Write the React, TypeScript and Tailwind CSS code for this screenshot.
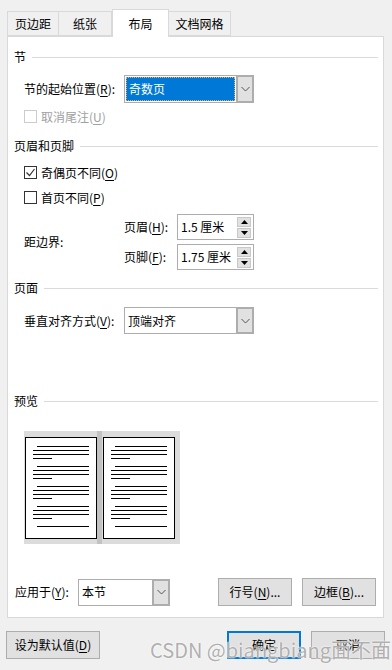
import type { ReactNode } from 'react'

const Key = ({ k }: { k: string }) => <span className="underline underline-offset-2">{k}</span>

function SectionHeader({ title, mt }: { title: string; mt: string }) {
  return (
    <div className={`flex items-center h-[14px] pl-[6px] pr-[5px] ${mt}`}>
      <span className="whitespace-nowrap">{title}</span>
      <div className="flex-1 h-px bg-[#dadada] ml-[6px]" />
    </div>
  )
}

function Chevron() {
  return (
    <svg width="9" height="6" viewBox="0 0 9 6">
      <polyline points="0.5,1 4.5,5 8.5,1" fill="none" stroke="#555" strokeWidth="1" />
    </svg>
  )
}

function Combo({ w, h, children }: { w: string; h: string; children: ReactNode }) {
  return (
    <div className={`flex ${w} ${h} bg-white`}>
      <div className="flex-1 flex items-center border border-r-0 border-[#adadad] min-w-0">{children}</div>
      <div className="w-[18px] border-2 border-[#adadad] bg-[#e1e1e1] flex items-center justify-center">
        <Chevron />
      </div>
    </div>
  )
}

function CheckBox({ checked, disabled, children }: { checked?: boolean; disabled?: boolean; children: ReactNode }) {
  return (
    <div className={`flex items-center h-[13px] pl-[16px] ${disabled ? 'text-[#a0a0a0]' : 'text-black'}`}>
      <div
        className={`w-[13px] h-[13px] border bg-white flex items-center justify-center ${
          disabled ? 'border-[#cccccc]' : 'border-[#333333]'
        }`}
      >
        {checked && (
          <svg width="11" height="11" viewBox="0 0 11 11">
            <polyline points="1.5,5.5 4.5,8.5 9.5,2" fill="none" stroke="#333" strokeWidth="1.2" />
          </svg>
        )}
      </div>
      <span className="ml-[4px] whitespace-nowrap">{children}</span>
    </div>
  )
}

function Spinner({ value }: { value: string }) {
  return (
    <div className="flex w-[77px] h-[26px] border border-[#adadad] bg-white items-center">
      <span className="flex-1 pl-[3px] whitespace-nowrap">{value}</span>
      <div className="flex flex-col gap-[1px] mr-[2px]">
        <div className="w-[14px] h-[10px] bg-[#e1e1e1] border border-[#c8c8c8] flex items-center justify-center">
          <svg width="7" height="4" viewBox="0 0 7 4"><polygon points="0,4 3.5,0 7,4" fill="#000" /></svg>
        </div>
        <div className="w-[14px] h-[10px] bg-[#e1e1e1] border border-[#c8c8c8] flex items-center justify-center">
          <svg width="7" height="4" viewBox="0 0 7 4"><polygon points="0,0 3.5,4 7,0" fill="#000" /></svg>
        </div>
      </div>
    </div>
  )
}

function Page() {
  const group = (last: boolean, i: number) => (
    <div key={i}>
      <div className={`h-px w-[52px] bg-black ml-[11px] ${i === 0 ? 'mt-[8px]' : 'mt-[7px]'}`} />
      {!last && (
        <>
          <div className="h-px w-[56px] bg-black ml-[7px] mt-[3px]" />
          <div className="h-px w-[56px] bg-black ml-[7px] mt-[3px]" />
          <div className="h-px w-[19px] bg-black ml-[7px] mt-[3px]" />
        </>
      )}
    </div>
  )
  return (
    <div className="w-[72px] h-[102px] bg-white border border-black">
      {[0, 1, 2, 3].map(i => group(false, i))}
      {group(true, 4)}
    </div>
  )
}

function Button({ w, children, primary }: { w: string; children: ReactNode; primary?: boolean }) {
  return (
    <div
      className={`${w} h-[28px] bg-[#e1e1e1] flex items-center justify-center whitespace-nowrap ${
        primary ? 'border-2 border-[#0078d7]' : 'border border-[#adadad]'
      }`}
    >
      {children}
    </div>
  )
}

export default function App() {
  const tabs = [
    { label: '页边距', w: 'w-[52px]' },
    { label: '纸张', w: 'w-[53px]' },
    { label: '布局', w: 'w-[57px]', active: true },
    { label: '文档网格', w: 'w-[62px]' },
  ]

  return (
    <div className="relative w-[392px] h-[670px] bg-[#f0f0f0] overflow-hidden text-[12px] leading-[14px] text-black font-['Microsoft_YaHei','Noto_Sans_CJK_SC',sans-serif]">
      {/* tabs */}
      <div className="flex items-end ml-[7px] pt-[9px] h-[37px] relative z-10">
        {tabs.map(t =>
          t.active ? (
            <div
              key={t.label}
              className={`${t.w} h-[28px] bg-white border border-b-0 border-[#d9d9d9] flex items-center justify-center`}
            >
              {t.label}
            </div>
          ) : (
            <div
              key={t.label}
              className={`${t.w} h-[25px] mb-px bg-[#f0f0f0] border border-l-0 first:border-l border-[#d9d9d9] flex items-center justify-center`}
            >
              {t.label}
            </div>
          )
        )}
      </div>

      {/* panel */}
      <div className="-mt-px ml-[7px] w-[377px] h-[582px] bg-white border border-[#d9d9d9] flex flex-col">
        <SectionHeader title="节" mt="mt-[13px]" />

        <div className="flex items-center mt-[11px] pl-[16px]">
          <span className="w-[100px] whitespace-nowrap">
            节的起始位置(<Key k="R" />):
          </span>
          <Combo w="w-[130px]" h="h-[28px]">
            <div className="mx-[1px] flex-1 h-[24px] bg-[#0078d7] outline outline-1 outline-dotted outline-[#e8b04a] -outline-offset-1 text-white flex items-center pl-[3px]">
              奇数页
            </div>
          </Combo>
        </div>

        <div className="mt-[7px]">
          <CheckBox disabled>
            取消尾注(<Key k="U" />)
          </CheckBox>
        </div>

        <SectionHeader title="页眉和页脚" mt="mt-[16px]" />

        <div className="mt-[13px]">
          <CheckBox checked>
            奇偶页不同(<Key k="O" />)
          </CheckBox>
        </div>
        <div className="mt-[12px]">
          <CheckBox>
            首页不同(<Key k="P" />)
          </CheckBox>
        </div>

        <div className="flex items-center mt-[10px] pl-[16px]">
          <span className="w-[100px]">距边界:</span>
          <div className="flex flex-col gap-[4px]">
            <div className="flex items-center">
              <span className="w-[53px] whitespace-nowrap">
                页眉(<Key k="H" />):
              </span>
              <Spinner value="1.5 厘米" />
            </div>
            <div className="flex items-center">
              <span className="w-[53px] whitespace-nowrap">
                页脚(<Key k="F" />):
              </span>
              <Spinner value="1.75 厘米" />
            </div>
          </div>
        </div>

        <SectionHeader title="页面" mt="mt-[11px]" />

        <div className="flex items-center mt-[12px] pl-[16px]">
          <span className="w-[100px] whitespace-nowrap">
            垂直对齐方式(<Key k="V" />):
          </span>
          <Combo w="w-[130px]" h="h-[27px]">
            <span className="pl-[3px]">顶端对齐</span>
          </Combo>
        </div>

        <SectionHeader title="预览" mt="mt-[60px]" />

        <div className="mt-[23px] ml-[16px] flex w-[156px] h-[113px] bg-[#dcdcdc]">
          <div className="pl-[1px] pt-[6px]">
            <Page />
          </div>
          <div className="w-[5px] h-full bg-[#c2c2c2]" />
          <div className="pl-[1px] pt-[6px]">
            <Page />
          </div>
        </div>

        <div className="flex items-center mt-[34px] pl-[7px]">
          <span className="w-[63px] whitespace-nowrap">
            应用于(<Key k="Y" />):
          </span>
          <Combo w="w-[92px]" h="h-[27px]">
            <span className="pl-[3px]">本节</span>
          </Combo>
          <div className="ml-[48px]">
            <Button w="w-[74px]">
              行号(<Key k="N" />)...
            </Button>
          </div>
          <div className="ml-[10px]">
            <Button w="w-[74px]">
              边框(<Key k="B" />)...
            </Button>
          </div>
        </div>
      </div>

      {/* footer */}
      <div className="flex mt-[13px] pl-[6px]">
        <Button w="w-[94px]">
          设为默认值(<Key k="D" />)
        </Button>
        <div className="ml-[127px]">
          <Button w="w-[74px]" primary>
            确定
          </Button>
        </div>
        <div className="ml-[10px]">
          <Button w="w-[74px]">取消</Button>
        </div>
      </div>

      {/* watermark */}
      <div className="absolute left-[150px] top-[638px] text-[20px] leading-[24px] whitespace-nowrap text-[#9a9a9a]/80 [text-shadow:0_0_2px_#ffffff,0_0_1px_#ffffff]">
        CSDN @biangbiang面不面
      </div>
    </div>
  )
}
